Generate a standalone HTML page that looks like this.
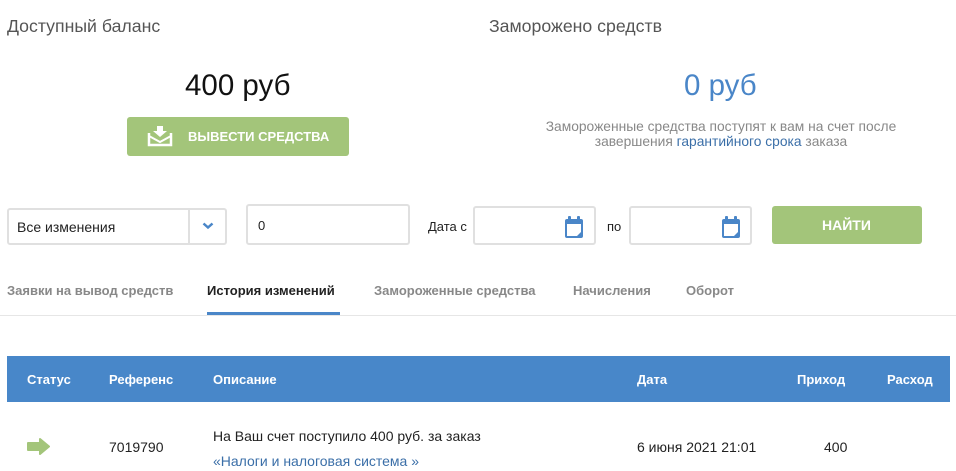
<!DOCTYPE html>
<html><head><meta charset="utf-8"><style>
*{margin:0;padding:0;box-sizing:border-box}
body{width:956px;height:471px;overflow:hidden;background:#fff;font-family:"Liberation Sans","DejaVu Sans",sans-serif;position:relative;color:#222}
.a{position:absolute;white-space:nowrap}
.box{position:absolute;border:2px solid #e0e0e0;border-radius:3px;background:#fff}
.th{position:absolute;top:372px;color:#fff;font-weight:bold;font-size:13px}
.tab{position:absolute;top:283px;font-size:13px;color:#888;font-weight:bold}
</style></head><body>
<div class="a" style="left:7px;top:16px;font-size:17.7px;color:#555">Доступный баланс</div>
<div class="a" style="left:489px;top:16px;font-size:17.7px;color:#555">Заморожено средств</div>
<div class="a" style="left:185px;top:69px;font-size:29.5px;color:#111">400 руб</div>
<div class="a" style="left:684px;top:69px;font-size:29.5px;color:#4a86c8">0 руб</div>
<div style="position:absolute;left:127px;top:117px;width:222px;height:39px;background:#a3c57a;border-radius:3px"></div>
<svg class="a" style="left:147px;top:125px" width="26" height="22" viewBox="0 0 26 22"><path d="M2 8v12h22V8" fill="none" stroke="#fff" stroke-width="2.5"/><path d="M2 11l11 6 11-6" fill="none" stroke="#fff" stroke-width="2"/><path d="M10 1h6v5h4l-7 6-7-6h4z" fill="#fff"/></svg>
<div class="a" style="left:188px;top:129px;font-size:13px;font-weight:bold;color:#fff">ВЫВЕСТИ СРЕДСТВА</div>
<div class="a" style="left:535px;top:119px;font-size:13.8px;color:#888;width:372px;text-align:center;line-height:15px">Замороженные средства поступят к вам на счет после<br>завершения <span style="color:#3b6fa8">гарантийного срока</span> заказа</div>
<div class="box" style="left:7px;top:208px;width:220px;height:37px"></div>
<div style="position:absolute;left:188px;top:209px;width:2px;height:35px;background:#e0e0e0"></div>
<div class="a" style="left:17px;top:219px;font-size:14px">Все изменения</div>
<svg class="a" style="left:202px;top:222px" width="12" height="8" viewBox="0 0 12 8"><path d="M1.5 1.5l4.5 4 4.5-4" fill="none" stroke="#4a86c8" stroke-width="2.5"/></svg>
<div class="box" style="left:246px;top:204px;width:164px;height:41px"></div>
<div class="a" style="left:258px;top:218px;font-size:13px">0</div>
<div class="a" style="left:428px;top:219px;font-size:13px">Дата с</div>
<div class="box" style="left:473px;top:206px;width:123px;height:39px"></div>
<div class="a" style="left:607px;top:219px;font-size:13px">по</div>
<div class="box" style="left:629px;top:206px;width:123px;height:39px"></div>
<svg class="a" style="left:564px;top:215px" width="20" height="24" viewBox="0 0 20 24"><rect x="1" y="4" width="18" height="19" rx="2" fill="#4a86c8"/><rect x="3" y="9" width="14" height="12" fill="#fff"/><rect x="4" y="1" width="3" height="6" rx="1" fill="#4a86c8"/><rect x="13" y="1" width="3" height="6" rx="1" fill="#4a86c8"/><path d="M13 21l4-4v4z" fill="#4a86c8"/></svg>
<svg class="a" style="left:721px;top:215px" width="20" height="24" viewBox="0 0 20 24"><rect x="1" y="4" width="18" height="19" rx="2" fill="#4a86c8"/><rect x="3" y="9" width="14" height="12" fill="#fff"/><rect x="4" y="1" width="3" height="6" rx="1" fill="#4a86c8"/><rect x="13" y="1" width="3" height="6" rx="1" fill="#4a86c8"/><path d="M13 21l4-4v4z" fill="#4a86c8"/></svg>
<div style="position:absolute;left:772px;top:206px;width:150px;height:38px;background:#a3c57a;border-radius:3px"></div>
<div class="a" style="left:822px;top:217px;font-size:14px;font-weight:bold;color:#fff">НАЙТИ</div>
<div class="tab" style="left:7px">Заявки на вывод средств</div>
<div class="tab" style="left:207px;color:#222">История изменений</div>
<div class="tab" style="left:374px">Замороженные средства</div>
<div class="tab" style="left:573px">Начисления</div>
<div class="tab" style="left:686px">Оборот</div>
<div style="position:absolute;left:0;top:315px;width:956px;height:1px;background:#e6e6e6"></div>
<div style="position:absolute;left:207px;top:312px;width:133px;height:3px;background:#4a86c8"></div>
<div style="position:absolute;left:7px;top:356px;width:943px;height:46px;background:#4887c9"></div>
<div class="th" style="left:27px">Статус</div>
<div class="th" style="left:109px">Референс</div>
<div class="th" style="left:213px">Описание</div>
<div class="th" style="left:637px">Дата</div>
<div class="th" style="left:797px">Приход</div>
<div class="th" style="left:887px">Расход</div>
<svg class="a" style="left:27px;top:438px" width="24" height="17" viewBox="0 0 24 17"><path d="M1 5h12V1l9 7.5-9 7.5v-4H1z" fill="#a3c57a" stroke="#a3c57a" stroke-width="2" stroke-linejoin="round"/></svg>
<div class="a" style="left:109px;top:439px;font-size:14px;color:#222">7019790</div>
<div class="a" style="left:213px;top:428px;font-size:14px;color:#222">На Ваш счет поступило 400 руб. за заказ</div>
<div class="a" style="left:213px;top:453px;font-size:14px;color:#3b6fa8">«Налоги и налоговая система »</div>
<div class="a" style="left:637px;top:439px;font-size:14px;color:#222">6 июня 2021 21:01</div>
<div class="a" style="left:824px;top:439px;font-size:14px;color:#222">400</div>
</body></html>
